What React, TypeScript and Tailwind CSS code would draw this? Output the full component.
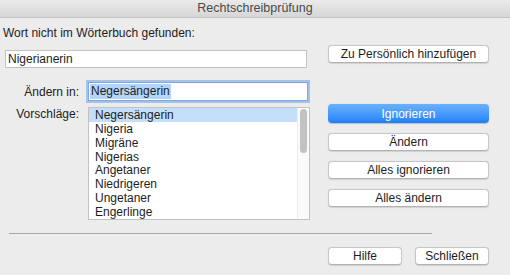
const suggestions = [
  "Negersängerin",
  "Nigeria",
  "Migräne",
  "Nigerias",
  "Angetaner",
  "Niedrigeren",
  "Ungetaner",
  "Engerlinge",
];

function MacButton({ label, className = "" }: { label: string; className?: string }) {
  return (
    <button
      className={
        "flex items-center justify-center rounded-[4px] border border-[#c6c6c6] border-b-[#b2b2b2] bg-white text-[12px] text-[#1d1d1d] shadow-[0_0.5px_1px_rgba(0,0,0,0.12)] " +
        className
      }
    >
      {label}
    </button>
  );
}

export default function App() {
  return (
    <div
      className="h-[275px] w-[510px] overflow-hidden bg-[#ececec] text-[12px] text-[#1d1d1d]"
      style={{ fontFamily: '"Liberation Sans", Arial, sans-serif' }}
    >
      {/* title bar */}
      <div className="flex h-[18px] items-center justify-center border-b border-[#c4c4c4] bg-gradient-to-b from-[#ebebeb] to-[#d6d6d6] text-[12.5px] text-[#4a4a4a]">
        Rechtschreibprüfung
      </div>

      <div className="flex">
        {/* left column */}
        <div className="flex w-[310px] flex-col">
          <div className="mt-[8px] ml-[3px] leading-[14px]">Wort nicht im Wörterbuch gefunden:</div>
          <div className="mt-[10px] ml-[5px] flex h-[18px] w-[302px] items-center border border-[#c2c2c2] bg-white pl-[2px] leading-none">
            Nigerianerin
          </div>

          <div className="mt-[14px] flex items-center">
            <div className="w-[79px] text-right leading-[14px]">Ändern in:</div>
            <div className="ml-[9px] flex h-[19px] w-[220px] items-center border border-[#7aa9e6] bg-white pl-[1px] shadow-[0_0_0_2px_rgba(110,160,230,0.55)]">
              <span className="bg-[#b3d5fb] px-[1px] leading-[15px]">Negersängerin</span>
            </div>
          </div>

          <div className="mt-[6px] flex items-start">
            <div className="w-[79px] text-right leading-[14px]">Vorschläge:</div>
            <div className="ml-[9px] flex h-[113px] w-[222px] border border-[#c2c2c2] bg-white">
              <div className="flex flex-1 flex-col">
                {suggestions.map((s, i) => (
                  <div
                    key={s}
                    className={
                      "flex h-[14.2px] items-center pl-[6px] leading-none " +
                      (i === 0 ? "bg-[#c4dffa]" : "")
                    }
                  >
                    {s}
                  </div>
                ))}
              </div>
              <div className="w-[12px] border-l border-[#ececec] bg-[#fafafa] pt-[1px]">
                <div className="mx-auto h-[44px] w-[7px] rounded-full bg-[#c2c2c2]" />
              </div>
            </div>
          </div>
        </div>

        {/* right column */}
        <div className="ml-[18px] flex w-[161px] flex-col">
          <MacButton label="Zu Persönlich hinzufügen" className="mt-[27px] h-[18px]" />
          <button className="mt-[41px] flex h-[19px] items-center justify-center rounded-[4px] bg-gradient-to-b from-[#6bb1fb] to-[#1b81fa] text-[12px] text-white shadow-[0_0.5px_1px_rgba(0,0,0,0.2)]">
            Ignorieren
          </button>
          <MacButton label="Ändern" className="mt-[10px] h-[18px]" />
          <MacButton label="Alles ignorieren" className="mt-[10px] h-[18px]" />
          <MacButton label="Alles ändern" className="mt-[10px] h-[18px]" />
        </div>
      </div>

      <div className="mt-[13px] ml-[9px] h-px w-[423px] bg-[#a9a9a9]" />

      <div className="mt-[13px] flex justify-end gap-[13px] pr-[21px]">
        <MacButton label="Hilfe" className="h-[18px] w-[74px]" />
        <MacButton label="Schließen" className="h-[18px] w-[74px]" />
      </div>
    </div>
  );
}
